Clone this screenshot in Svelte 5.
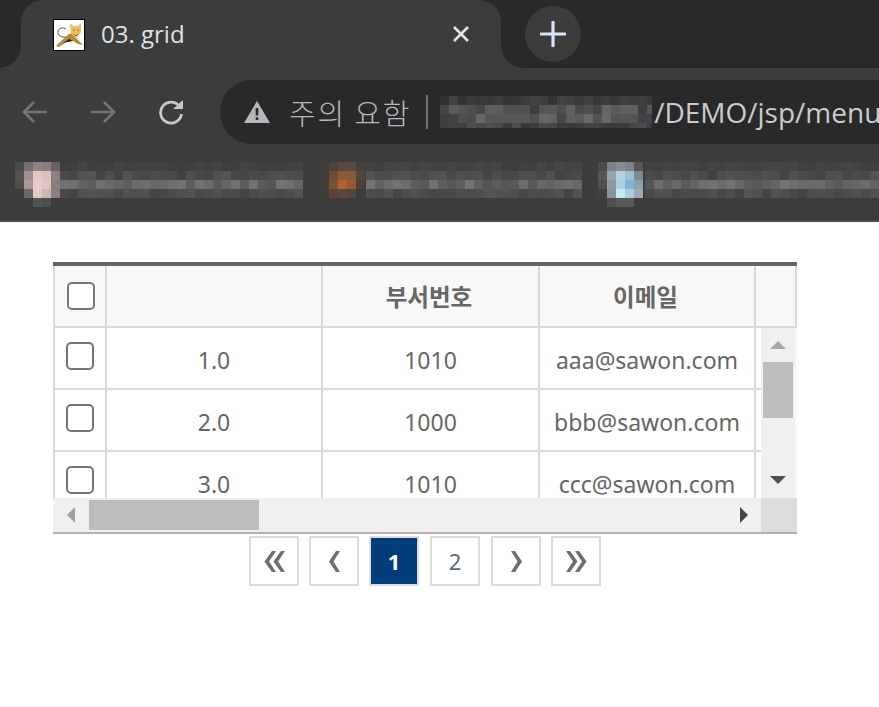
<script>

    // grid data
    const rows = [
        { no: '1.0', dept: '1010', email: 'aaa@sawon.com' },
        { no: '2.0', dept: '1000', email: 'bbb@sawon.com' },
        { no: '3.0', dept: '1010', email: 'ccc@sawon.com' }
    ];

    // blurred areas are drawn as mosaic blocks
    const block = 9;

    function noise(i, j) {
        const v = Math.sin(i * 12.9898 + j * 78.233) * 43758.5453;
        return v - Math.floor(v);
    }

    function grey(level) {
        const n = Math.round(level);
        return `rgb(${n},${n},${n + 2})`;
    }

    function text_blocks(x0, x1, row_levels) {
        const out = [];
        row_levels.forEach((level, j) => {
            for (let i = 0; x0 + i * block < x1; i++) {
                out.push({
                    x: x0 + i * block,
                    y: j * block,
                    fill: grey(level[0] + noise(i + x0, j) * level[1])
                });
            }
        });
        return out;
    }

    function icon_blocks(x0, y0, pixels) {
        const out = [];
        pixels.forEach((row, j) => {
            row.forEach((fill, i) => {
                if (fill) out.push({ x: x0 + i * block, y: y0 + j * block, fill });
            });
        });
        return out;
    }

    const text_rows = [[62, 8], [66, 18], [84, 32], [68, 16]];

    const bookmarks = [
        ...text_blocks(60, 300, text_rows),
        ...text_blocks(366, 575, text_rows),
        ...text_blocks(645, 872, text_rows),
        ...icon_blocks(15, 0, [
            ['#4a4a4a', '#7a6f6f', '#8f8383', '#8a7f7f', '#6a6262'],
            ['#565050', '#a08f8f', '#e3c8c6', '#d9c0be', '#8d8080'],
            ['#504c4c', '#a99999', '#e6cbc9', '#dcc4c2', '#8a7d7d'],
            [null, '#6f6868', '#dfc8c8', '#c9b6b6', '#878080'],
            [null, null, '#555', '#4f4f4f', null]
        ]),
        ...icon_blocks(320, 0, [
            ['#423c38', '#4e433c', '#5c4a3e', '#584a3e', '#44403c'],
            ['#423c38', '#6d4f39', '#8b5a35', '#8a5a36', '#554438'],
            ['#403c38', '#7a5232', '#b4602c', '#97582f', '#4c4138'],
            [null, '#54443a', '#5c483a', '#56453a', null]
        ]),
        ...icon_blocks(598, 0, [
            ['#4c4c4c', '#7d8489', '#868d92', '#7d8489', '#585858'],
            ['#565656', '#99a3aa', '#b6cfe0', '#9cc0d4', '#7d8a8f'],
            ['#505050', '#90989c', '#a9cfe4', '#80b2d0', '#8da3ab'],
            ['#404040', '#87949c', '#c6e9f6', '#b0cbdb', '#a0a6b8'],
            [null, '#4e4e4e', '#5a5a5a', '#5a5a5a', null]
        ])
    ];

    const url_blocks = text_blocks(0, 212, [[50, 16], [60, 42], [62, 44], [56, 24]]);

</script>

<div class="page">

    <header class="browser">

        <div class="tabstrip">
            <div class="tab-edge"></div>
            <div class="tab">
                <span class="favicon">
                    <svg viewBox="0 0 30 30" width="30" height="30">
                        <path d="M13 17 C7 18 3 15 4 11 C5 8 9 7 12 9" fill="none" stroke="#555" stroke-width="1" />
                        <path d="M2 26 C6 22 10 18 15 14 L20 13 L23 19 L29 25 L24 24 L19 21 L12 22 L5 27 Z" fill="#b98a35" />
                        <path d="M16 3 L19 6 L24 6 L27 3 L27 12 L22 19 L17 13 Z" fill="#e9bf60" />
                        <path d="M19 10 H20.5 M23.5 10 H25 M20 14 L22 16 L24 14" fill="none" stroke="#8a6420" stroke-width="1" />
                        <path d="M8 24 L15 19 L19 21 L13 22 Z" fill="#222" />
                    </svg>
                </span>
                <span class="tab-title">03. grid</span>
                <svg class="tab-close" viewBox="0 0 18 18" width="18" height="18">
                    <path d="M2 2 L16 16 M16 2 L2 16" stroke="#e6e6e6" stroke-width="2.6" />
                </svg>
            </div>
            <div class="new-tab">
                <svg viewBox="0 0 26 26" width="26" height="26">
                    <path d="M13 1 V25 M1 13 H25" stroke="#d6e3fb" stroke-width="3.2" stroke-linecap="round" />
                </svg>
            </div>
        </div>

        <div class="toolbar">
            <svg class="nav" viewBox="0 0 26 26" width="26" height="26">
                <path d="M25 13 H3 M12 3 L2 13 L12 23" fill="none" stroke="#757575" stroke-width="2.6" />
            </svg>
            <svg class="nav" viewBox="0 0 26 26" width="26" height="26">
                <path d="M1 13 H23 M14 3 L24 13 L14 23" fill="none" stroke="#757575" stroke-width="2.6" />
            </svg>
            <svg class="nav" viewBox="0 0 26 26" width="26" height="26">
                <path d="M22 8 A10.5 10.5 0 1 0 23.5 15" fill="none" stroke="#c8c8c8" stroke-width="2.8" />
                <path d="M15 10 H25 V1 Z" fill="#c8c8c8" />
            </svg>
            <div class="omnibox">
                <svg class="warn" viewBox="0 0 26 24" width="26" height="24">
                    <path d="M13 1 L26 23 H0 Z" fill="#b4b8bc" />
                    <path d="M11.7 8 H14.3 V15.5 H11.7 Z M11.7 17.3 H14.3 V20 H11.7 Z" fill="#292929" />
                </svg>
                <span class="warn-text">주의 요함</span>
                <span class="divider"></span>
                <svg class="url-blur" width="212" height="32">
                    {#each url_blocks as b}
                        <rect x={b.x} y={b.y} width={block} height={block} fill={b.fill} />
                    {/each}
                </svg>
                <span class="url">/DEMO/jsp/menu</span>
            </div>
        </div>

        <div class="bookmarks">
            <svg width="879" height="46">
                {#each bookmarks as b}
                    <rect x={b.x} y={b.y} width={block} height={block} fill={b.fill} />
                {/each}
            </svg>
        </div>
    </header>

    <main class="content">

        <div class="grid">

            <div class="row head">
                <div class="cell c-check"><span class="check"></span></div>
                <div class="cell c-no"></div>
                <div class="cell c-dept">부서번호</div>
                <div class="cell c-mail">이메일</div>
                <div class="cell c-rest"></div>
            </div>

            <div class="viewport">
                <div class="body">
                    {#each rows as row}
                        <div class="row">
                            <div class="cell c-check"><span class="check"></span></div>
                            <div class="cell c-no">{row.no}</div>
                            <div class="cell c-dept">{row.dept}</div>
                            <div class="cell c-mail">{row.email}</div>
                            <div class="cell c-rest"></div>
                        </div>
                    {/each}
                </div>
                <div class="vbar">
                    <span class="arrow up"></span>
                    <span class="vthumb"></span>
                    <span class="arrow down"></span>
                </div>
            </div>

            <div class="hbar-row">
                <div class="hbar">
                    <span class="arrow left"></span>
                    <span class="hthumb"></span>
                    <span class="arrow right"></span>
                </div>
                <div class="corner"></div>
            </div>
        </div>

        <nav class="pager">
            <button>
                <svg viewBox="0 0 21 21" width="21" height="21">
                    <path d="M8 0 H12 L5 10.5 L12 21 H8 L0.5 10.5 Z M17 0 H21 L14 10.5 L21 21 H17 L9.5 10.5 Z" fill="#6e6e6e" />
                </svg>
            </button>
            <button>
                <svg viewBox="0 0 11 21" width="11" height="21">
                    <path d="M7 0 H11 L4.5 10.5 L11 21 H7 L0 10.5 Z" fill="#6e6e6e" />
                </svg>
            </button>
            <button class="active">1</button>
            <button class="num">2</button>
            <button>
                <svg viewBox="0 0 11 21" width="11" height="21">
                    <path d="M4 0 H0 L6.5 10.5 L0 21 H4 L11 10.5 Z" fill="#6e6e6e" />
                </svg>
            </button>
            <button>
                <svg viewBox="0 0 21 21" width="21" height="21">
                    <path d="M4 0 H0 L7 10.5 L0 21 H4 L11.5 10.5 Z M13 0 H9 L16 10.5 L9 21 H13 L20.5 10.5 Z" fill="#6e6e6e" />
                </svg>
            </button>
        </nav>
    </main>
</div>

<style>

    :global(body) {
        margin: 0;
        background: #fff;
        overflow: hidden;
    }

    .page {
        width: 879px;
        height: 707px;
        font-family: "Noto Sans", "Noto Sans CJK KR", sans-serif;
    }

    /* browser frame */

    .browser {
        height: 222px;
        box-sizing: border-box;
        background: #3c3c3c;
        border-bottom: 2px solid #4a4a4a;
        overflow: hidden;
    }

    .tabstrip {
        height: 68px;
        display: flex;
        background: #292929;
    }

    .tab-edge {
        width: 21px;
        background: #292929;
    }

    .tab {
        width: 480px;
        position: relative;
        display: flex;
        align-items: center;
        box-sizing: border-box;
        padding: 0 31px 0 32px;
        background: #3c3c3c;
        border-radius: 22px 22px 0 0;
    }

    /* flared corners at the foot of the tab */
    .tab::before,
    .tab::after {
        content: "";
        position: absolute;
        bottom: 0;
        width: 22px;
        height: 22px;
    }

    .tab::before {
        right: 100%;
        background: radial-gradient(circle at 0 0, transparent 21.5px, #3c3c3c 22px);
    }

    .tab::after {
        left: 100%;
        background: radial-gradient(circle at 100% 0, transparent 21.5px, #3c3c3c 22px);
    }

    .favicon {
        width: 32px;
        height: 32px;
        margin-top: 1px;
        border: 1px solid #000;
        box-sizing: border-box;
        background: #fff;
        display: block;
    }

    .favicon svg {
        display: block;
    }

    .tab-title {
        margin-left: 16px;
        margin-bottom: 2px;
        flex: 1;
        font-size: 24px;
        font-family: "Open Sans", sans-serif;
        color: #dfe1e5;
    }

    .new-tab {
        width: 56px;
        height: 56px;
        margin: 6px 0 0 24px;
        border-radius: 50%;
        background: #3c3c3c;
        display: flex;
        align-items: center;
        justify-content: center;
        position: relative;
    }

    .toolbar {
        height: 76px;
        box-sizing: border-box;
        padding: 12px 0 0 22px;
        display: flex;
        align-items: flex-start;
    }

    .nav {
        flex: none;
        margin: 19px 42px 0 0;
    }

    .nav:nth-of-type(3) {
        margin-right: 36px;
    }

    .omnibox {
        flex: 1;
        min-width: 0;
        height: 64px;
        display: flex;
        align-items: center;
        padding-left: 24px;
        background: #292929;
        border-radius: 32px 0 0 32px;
        overflow: hidden;
        white-space: nowrap;
    }

    .warn {
        flex: none;
    }

    .warn-text {
        margin-left: 19px;
        font-size: 29px;
        letter-spacing: 1.8px;
        font-weight: 300;
        color: #b4b8bc;
        font-family: "Noto Sans CJK KR", sans-serif;
    }

    .divider {
        flex: none;
        width: 2px;
        height: 34px;
        margin-left: 15px;
        background: #6f7276;
    }

    .url-blur {
        flex: none;
        margin-left: 12px;
    }

    .url {
        font-size: 28px;
        margin-left: 2px;
        color: #c8cbd0;
        font-family: "Open Sans", sans-serif;
    }

    .bookmarks {
        padding-top: 18px;
    }

    .bookmarks svg {
        display: block;
    }

    /* page content */

    .content {
        padding: 40px 0 0 53px;
    }

    .grid {
        width: 744px;
        box-sizing: border-box;
        border-top: 4px solid #666;
        border-bottom: 2px solid #b5b1b1;
        color: #666;
        font-size: 23px;
    }

    .row {
        display: flex;
        height: 62px;
        flex: none;
        box-sizing: border-box;
        border-bottom: 2px solid #d9d9d9;
    }

    .head {
        height: 62px;
        background: #f8f8f8;
        font-weight: 700;
        font-size: 23.5px;
        border-right: 2px solid #d9d9d9;
    }

    .head .c-dept,
    .head .c-mail {
        padding-right: 3px;
    }

    .cell {
        flex: none;
        box-sizing: border-box;
        border-right: 2px solid #d9d9d9;
        display: flex;
        align-items: center;
        justify-content: center;
        white-space: nowrap;
    }

    .body .c-no,
    .body .c-dept,
    .body .c-mail {
        padding-top: 4px;
    }

    .c-check {
        width: 54px;
        border-left: 2px solid #d9d9d9;
    }

    .c-no {
        width: 216px;
    }

    .c-dept {
        width: 217px;
    }

    .c-mail {
        width: 216px;
    }

    .c-rest {
        width: 38px;
        border-right: none;
    }

    .head .c-rest {
        flex: 1;
    }

    .check {
        display: block;
        width: 28px;
        height: 28px;
        box-sizing: border-box;
        border: 2px solid #767676;
        border-radius: 5px;
        background: #fff;
        margin-bottom: 4px;
    }

    .head .check {
        margin: 0 0 0 2px;
    }

    .viewport {
        display: flex;
        height: 170px;
        overflow: hidden;
    }

    .body {
        width: 708px;
        flex: none;
        overflow: hidden;
    }

    .body .c-rest {
        width: 5px;
    }

    .vbar {
        flex: 1;
        position: relative;
        background: #f0f0f0;
        border-right: 2px solid #f8f8f8;
        box-sizing: border-box;
    }

    .vthumb {
        position: absolute;
        left: 2px;
        top: 34px;
        width: 30px;
        height: 56px;
        background: #bdbdbd;
    }

    .hbar-row {
        display: flex;
        height: 34px;
    }

    .hbar {
        width: 708px;
        position: relative;
        background: #f0f0f0;
        flex: none;
    }

    .hthumb {
        position: absolute;
        left: 36px;
        top: 2px;
        width: 170px;
        height: 30px;
        background: #bdbdbd;
    }

    .corner {
        flex: 1;
        background: #dcdcdc;
    }

    .arrow {
        position: absolute;
        width: 0;
        height: 0;
        border-style: solid;
        border-color: transparent;
    }

    .arrow.up {
        left: 9px;
        top: 13px;
        border-width: 0 8px 8px 8px;
        border-bottom-color: #a8a8a8;
    }

    .arrow.down {
        left: 9px;
        top: 148px;
        border-width: 8px 8px 0 8px;
        border-top-color: #505050;
    }

    .arrow.left {
        left: 14px;
        top: 9px;
        border-width: 8px 8px 8px 0;
        border-right-color: #a0a0a0;
    }

    .arrow.right {
        left: 687px;
        top: 9px;
        border-width: 8px 0 8px 8px;
        border-left-color: #454545;
    }

    /* pagination */

    .pager {
        display: flex;
        justify-content: flex-start;
        gap: 10px;
        margin: 2px 0 0 196px;
    }

    .pager button {
        width: 50px;
        height: 50px;
        padding: 0;
        box-sizing: border-box;
        border: 2px solid #dcdcdc;
        background: #fff;
        display: flex;
        align-items: center;
        justify-content: center;
        font-family: inherit;
        font-size: 22px;
        color: #5a6a7a;
    }

    .pager .active {
        background: #003c7a;
        color: #fff;
        font-weight: 700;
    }

    .pager .num {
        margin-left: 1px;
    }

    .pager .active + .num + button {
        margin-left: 1px;
    }

</style>
